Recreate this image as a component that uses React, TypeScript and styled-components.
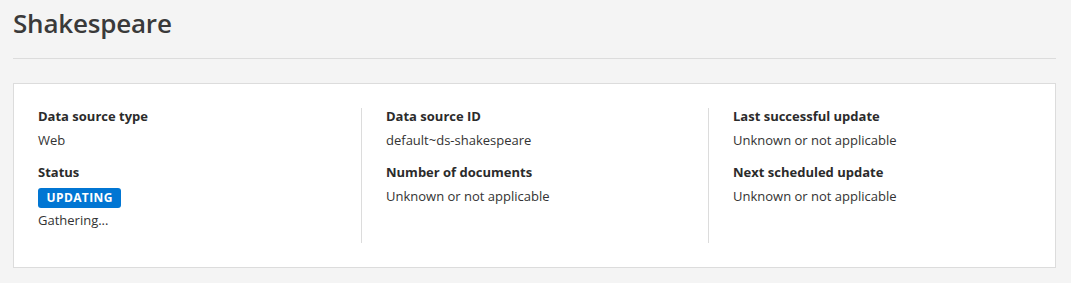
import React from 'react';
import styled, { createGlobalStyle } from 'styled-components';

const GlobalStyle = createGlobalStyle`
  body {
    margin: 0;
    background: #f4f4f4;
    font-family: "Open Sans", "Liberation Sans", sans-serif;
    color: #2b2b2b;
  }
`;

const Page = styled.div`
  padding: 0 15px 0 13px;
`;

const Title = styled.h1`
  margin: 0;
  padding-top: 4px;
  font-size: 26px;
  line-height: 38px;
  font-weight: 600;
  letter-spacing: -0.2px;
  color: #3a3a3a;
  padding-bottom: 16px;
  border-bottom: 1px solid #dcdcdc;
`;

const Card = styled.div`
  margin-top: 24px;
  background: #fff;
  border: 1px solid #dcdcdc;
  padding: 24px 0;
  display: grid;
  grid-template-columns: repeat(3, 1fr);
`;

const Column = styled.div<{ $divider?: boolean }>`
  padding: 0 24px 15px 24px;
  border-left: ${p => (p.$divider ? '1px solid #dcdcdc' : 'none')};
`;

const Label = styled.div`
  font-size: 13px;
  line-height: 16px;
  font-weight: 700;
  color: #2b2b2b;
  margin-bottom: 8px;
`;

const Value = styled.div`
  font-size: 13px;
  line-height: 16px;
  color: #333;
  margin-bottom: 16px;
  &:last-child {
    margin-bottom: 0;
  }
`;

const Badge = styled.span`
  display: inline-block;
  background: #0176d3;
  color: #fff;
  font-size: 12px;
  font-weight: 700;
  letter-spacing: 0.4px;
  line-height: 20px;
  height: 20px;
  padding: 0 8.5px;
  border-radius: 3px;
  margin-bottom: 4px;
  vertical-align: top;
`;

const BadgeRow = styled.div`
  line-height: 0;
`;

interface Field {
  label: string;
  value: string;
}

const columns: Field[][] = [
  [
    { label: 'Data source ID', value: 'default~ds-shakespeare' },
    { label: 'Number of documents', value: 'Unknown or not applicable' },
  ],
  [
    { label: 'Last successful update', value: 'Unknown or not applicable' },
    { label: 'Next scheduled update', value: 'Unknown or not applicable' },
  ],
];

export default function App() {
  return (
    <Page>
      <GlobalStyle />
      <Title>Shakespeare</Title>
      <Card>
        <Column>
          <Label>Data source type</Label>
          <Value>Web</Value>
          <Label>Status</Label>
          <BadgeRow>
            <Badge>UPDATING</Badge>
          </BadgeRow>
          <Value>Gathering...</Value>
        </Column>
        {columns.map((fields, i) => (
          <Column key={i} $divider>
            {fields.map(f => (
              <React.Fragment key={f.label}>
                <Label>{f.label}</Label>
                <Value>{f.value}</Value>
              </React.Fragment>
            ))}
          </Column>
        ))}
      </Card>
    </Page>
  );
}
